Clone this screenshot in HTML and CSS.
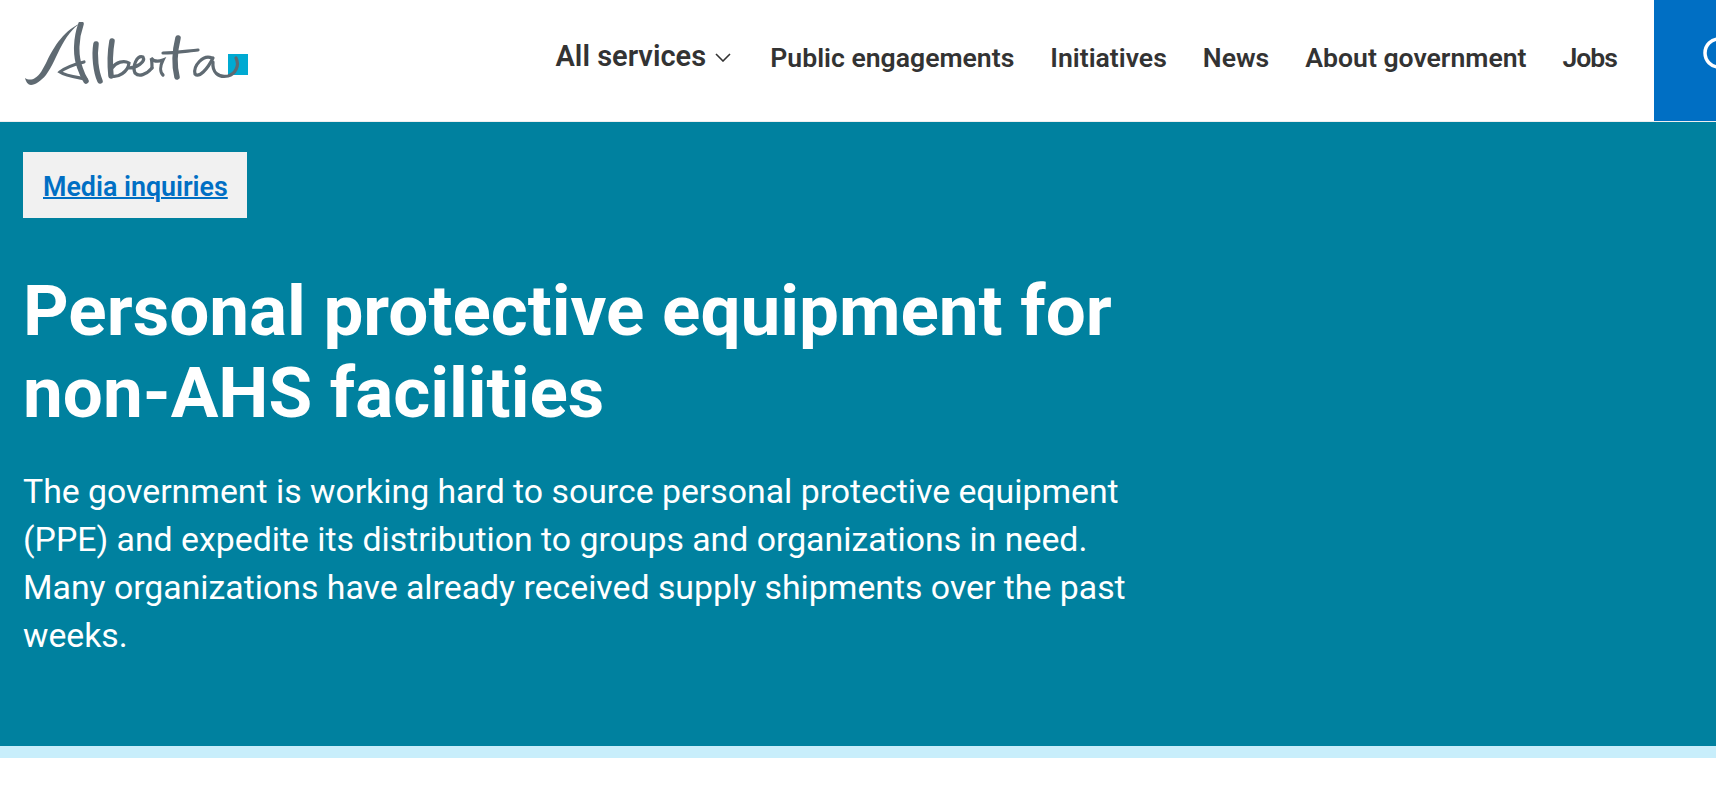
FILE: index.html
```html
<!DOCTYPE html>
<html lang="en">
<head>
    <meta charset="UTF-8">
    <meta name="viewport" content="width=device-width, initial-scale=1.0">
    <title>Personal protective equipment for non-AHS facilities</title>
    <link rel="stylesheet" href="styles.css">
</head>
<body>

    <header class="site-header">
        <a class="logo" href="#" aria-label="Alberta">
            <svg width="226" height="64" viewBox="24 22 226 64">
                <rect x="228" y="54" width="20" height="21" fill="#00aad2"/>
                <path fill="#5f6a72" d="M84 22C76 24 68 34 62 45C56 56 52 67 46 75C41 81 35 85 31 85C28 85 26 82 25 78C28 80 32 80 35 78C40 75 43 69 47 61C54 47 64 29 84 22Z"/>
                <g class="logo-stems">
                    <path d="M81 24C76 38 75 55 80 68C82 74 84 78 86 81"/>
                    <path d="M96 44C94 56 96 72 100 81"/>
                    <path d="M112 41C110 52 110 66 111 76"/>
                    <path d="M178 38C175 50 174 65 177 77"/>
                </g>
                <g class="logo-hairs">
                    <path d="M84 62C76 64 66 67 60 72C66 76 76 77 86 79"/>
                    <path d="M111 76C118 78 128 72 129 63C124 60 116 62 112 68"/>
                    <path d="M129 68C136 68 146 62 143 57C137 55 132 66 135 73C139 77 146 75 152 68"/>
                    <path d="M152 68C152 64 152 60 151 58C154 62 158 62 163 60C160 66 160 72 163 75"/>
                    <path d="M163 53C175 53 187 51 198 50"/>
                    <path d="M212 58C203 54 193 66 195 74C199 78 207 70 213 58"/>
                    <path d="M213 62C212 72 218 78 228 76C235 74 240 66 236 58"/>
                </g>
            </svg>
        </a>
        <nav class="main-nav">
            <a href="#" class="nav-services">All services
                <svg width="16" height="9" viewBox="0 0 16 9"><path d="M1 1l7 7 7-7"/></svg>
            </a>
            <a href="#">Public engagements</a>
            <a href="#">Initiatives</a>
            <a href="#">News</a>
            <a href="#">About government</a>
            <a href="#" class="nav-jobs">Jobs</a>
        </nav>
        <button class="search-btn" aria-label="Search">
            <svg width="42" height="42" viewBox="0 0 42 42"><circle cx="16" cy="16" r="14"/><path d="M26 26l14 14"/></svg>
        </button>
    </header>

    <section class="hero">
        <div class="hero-inner">
            <div class="media-box"><a href="#">Media inquiries</a></div>
            <h1>Personal protective equipment for non-AHS facilities</h1>
            <p>The government is working hard to source personal protective equipment (PPE) and expedite its distribution to groups and organizations in need. Many organizations have already received supply shipments over the past weeks.</p>
        </div>
    </section>
    <div class="hero-band"></div>

</body>
</html>
```

FILE: styles.css
```css
html, body {
    margin: 0;
    overflow: hidden;
}

body {
    font-family: Roboto, "Liberation Sans", sans-serif;
    background: #fff;
}

/* header */
.site-header {
    display: flex;
    align-items: stretch;
    height: 121px;
    border-bottom: 1px solid #eee;
    background: #fff;
}

.logo {
    display: block;
    margin: 22px 0 0 24px;
}

.logo-stems path,
.logo-hairs path {
    fill: none;
    stroke: #5f6a72;
    stroke-linecap: round;
}

.logo-stems path {
    stroke-width: 5.5;
}

.logo-hairs path {
    stroke-width: 3.2;
}

.main-nav {
    display: flex;
    align-items: center;
    gap: 36px;
    margin-left: auto;
    margin-right: 37px;
    padding-bottom: 7px;
}

.main-nav a {
    color: #333;
    font-size: 26.6px;
    font-weight: 600;
    text-decoration: none;
}

.main-nav .nav-services {
    font-size: 29px;
    margin-right: 3px;
    padding-bottom: 2px;
}

.main-nav .nav-jobs {
    letter-spacing: -1px;
}

.nav-services svg {
    margin-left: 2px;
    vertical-align: 4px;
}

.nav-services path {
    fill: none;
    stroke: #333;
    stroke-width: 1.6;
}

.search-btn {
    display: flex;
    align-items: flex-start;
    width: 62px;
    padding: 37px 0 0 49px;
    border: none;
    background: #006fc4;
    overflow: hidden;
}

.search-btn svg {
    flex: none;
}

.search-btn circle,
.search-btn path {
    fill: none;
    stroke: #fff;
    stroke-width: 3.5;
}

/* hero */
.hero {
    background: #00819f;
    height: 624px;
}

.hero-inner {
    width: 1140px;
    padding: 30px 0 0 23px;
}

.media-box {
    display: inline-block;
    padding: 19px 19px 15px 20px;
    background: #f1f1f1;
}

.media-box a {
    color: #006fc4;
    font-size: 26.8px;
    line-height: 32px;
    font-weight: 600;
    text-decoration-thickness: 2px;
}

.hero h1 {
    margin: 52px 0 0;
    color: #fff;
    font-size: 71px;
    line-height: 82px;
    font-weight: 700;
}

.hero p {
    margin: 34px 0 0;
    color: #fff;
    font-size: 33.8px;
    line-height: 48px;
}

.hero-band {
    height: 12px;
    background: #c8eefb;
}
```
